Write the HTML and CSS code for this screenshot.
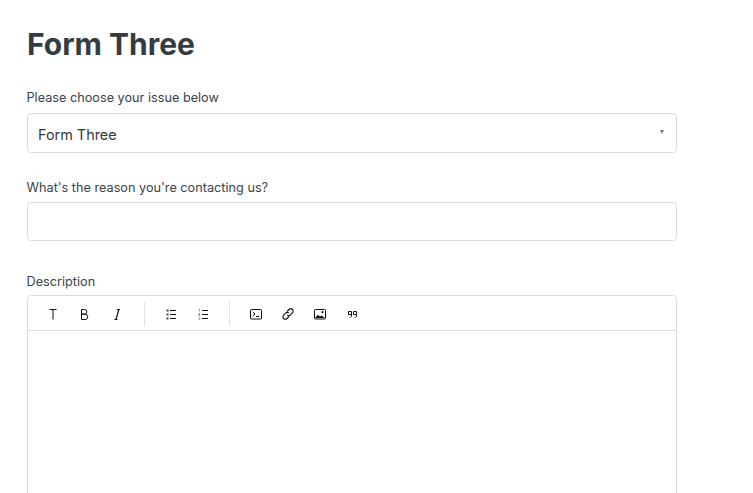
FILE: index.html
```html
<!DOCTYPE html>
<html lang="en">
<head>
    <meta charset="UTF-8">
    <meta name="viewport" content="width=device-width, initial-scale=1.0">
    <title>Form Three</title>
    <link rel="stylesheet" href="styles.css">
</head>
<body>
    <div class="wrap">
        <h1 class="title">Form Three</h1>

        <div class="field field-select">
            <label class="label">Please choose your issue below</label>
            <div class="select">
                <span>Form Three</span>
                <span class="arrow"></span>
            </div>
        </div>

        <div class="field field-input">
            <label class="label label-tight">What's the reason you're contacting us?</label>
            <div class="input"></div>
        </div>

        <div class="field">
            <label class="label label-tighter">Description</label>
            <div class="editor">
                <div class="toolbar">
                    <div class="tool-group">
                        <button class="tool">
                            <svg width="16" height="16" viewBox="0 0 16 16"><path d="M4.5 3.5h7M8 3.5V13.5" fill="none" stroke="#111"/></svg>
                        </button>
                        <button class="tool">
                            <svg width="16" height="16" viewBox="0 0 16 16"><path d="M4.5 3.5h3a2.3 2.3 0 0 1 0 4.7h-3zM4.5 8.2h3.6a2.6 2.6 0 0 1 0 5.3H4.5z" fill="none" stroke="#111"/></svg>
                        </button>
                        <button class="tool">
                            <svg width="16" height="16" viewBox="0 0 16 16"><path d="M8 3.5h3M5.5 13.5h3M9.8 3.5L7 13.5" fill="none" stroke="#111" stroke-width="1.2"/></svg>
                        </button>
                    </div>
                    <div class="tool-group">
                        <button class="tool">
                            <svg width="16" height="16" viewBox="0 0 16 16"><path d="M7 4.5h6M7 8.5h6M7 12.5h6" fill="none" stroke="#111"/><path d="M3.5 3.500h2v2h-2zM3.500 7.500h2v2h-2zM3.500 11.500h2v2h-2z" fill="#444"/></svg>
                        </button>
                        <button class="tool">
                            <svg width="16" height="16" viewBox="0 0 16 16"><path d="M7 4.500h6M7 8.500h6M7 12.500h6" fill="none" stroke="#111"/><path d="M3.500 3.500h1v2M3.500 7.500h1.500v1H3.500v1H5M3.500 11.500H5v2H3.500" fill="none" stroke="#888" stroke-width=".8"/></svg>
                        </button>
                    </div>
                    <div class="tool-group">
                        <button class="tool">
                            <svg width="16" height="16" viewBox="0 0 16 16"><rect x="2.500" y="3.500" width="11" height="9.500" rx=".8" fill="none" stroke="#111"/><path d="M4.800 6l2.200 2-2.200 2M8 10.500h3" fill="none" stroke="#111"/></svg>
                        </button>
                        <button class="tool">
                            <svg width="16" height="16" viewBox="0 0 16 16"><path d="M7 5.500l2-2a2.300 2.300 0 0 1 3.400 3.400l-2 2a2.300 2.300 0 0 1-3.200 0M9 10.500l-2 2a2.300 2.300 0 0 1-3.400-3.400l2-2a2.300 2.300 0 0 1 3.200 0" fill="none" stroke="#111" stroke-width="1.100"/></svg>
                        </button>
                        <button class="tool">
                            <svg width="16" height="16" viewBox="0 0 16 16"><rect x="2.500" y="3.500" width="11" height="9.500" rx=".8" fill="none" stroke="#111"/><path d="M3 12l3-3.200 2 1.600 1.500-1 3.500 2.600z" fill="#111"/><circle cx="10.500" cy="6.200" r="1.100" fill="#111"/></svg>
                        </button>
                        <button class="tool">
                            <svg width="16" height="16" viewBox="0 0 16 16"><path d="M4.500 5.500h3v3h-3zM9.500 5.500h3v3h-3z" fill="none" stroke="#111"/><path d="M7.500 8.500v1.700l-1.500 1.500M12.500 8.500v1.700L11 11.700" fill="none" stroke="#111"/></svg>
                        </button>
                    </div>
                </div>
                <div class="editor-body"></div>
            </div>
        </div>
    </div>
</body>
</html>
```

FILE: styles.css
```css
html, body {
  margin: 0;
  padding: 0;
  height: 493px;
  overflow: hidden;
  background: #fff;
}

body {
  font-family: Inter, "Liberation Sans", sans-serif;
  color: #353c42;
}

.wrap {
  width: 650px;
  padding: 26px 0 0 27px;
}

.title {
  margin: 0 0 28px;
  font-size: 30px;
  line-height: 36px;
  font-weight: 700;
  color: #343c43;
}

.label {
  display: block;
  margin-bottom: 7px;
  margin-left: -0.5px;
  font-size: 12.7px;
  line-height: 16px;
  color: #3c4349;
}

.label-tight {
  margin-bottom: 6px;
}

.label-tighter {
  margin-bottom: 5px;
}

.field-select {
  margin-bottom: 27px;
}

.field-input {
  margin-bottom: 33px;
}

.select, .input {
  box-sizing: border-box;
  border: 1px solid #dcdcdc;
  border-radius: 4px;
  background: #fff;
}

.select {
  display: flex;
  align-items: center;
  justify-content: space-between;
  height: 40px;
  padding: 2px 12px 0 10px;
  font-size: 14.4px;
  color: #33393f;
}

.arrow {
  width: 0;
  height: 0;
  margin-bottom: 4px;
  border-left: 2.5px solid transparent;
  border-right: 2.5px solid transparent;
  border-top: 4px solid #777;
}

.input {
  height: 39px;
}

.editor {
  box-sizing: border-box;
  height: 260px;
  border: 1px solid #dcdcdc;
  border-radius: 4px;
}

.toolbar {
  display: flex;
  align-items: center;
  box-sizing: border-box;
  height: 35px;
  padding-top: 1px;
  border-bottom: 1px solid #dfdfdf;
}

.tool-group {
  display: flex;
  gap: 8px;
  height: 24px;
  align-items: center;
  padding: 0 14px;
  border-right: 1px solid #dfdfdf;
}

.tool-group:first-child {
  padding: 0 15px 0 13px;
}

.tool-group:last-child {
  border-right: none;
}

.tool {
  display: flex;
  align-items: center;
  justify-content: center;
  width: 24px;
  height: 24px;
  padding: 0;
  border: none;
  background: none;
}
```
